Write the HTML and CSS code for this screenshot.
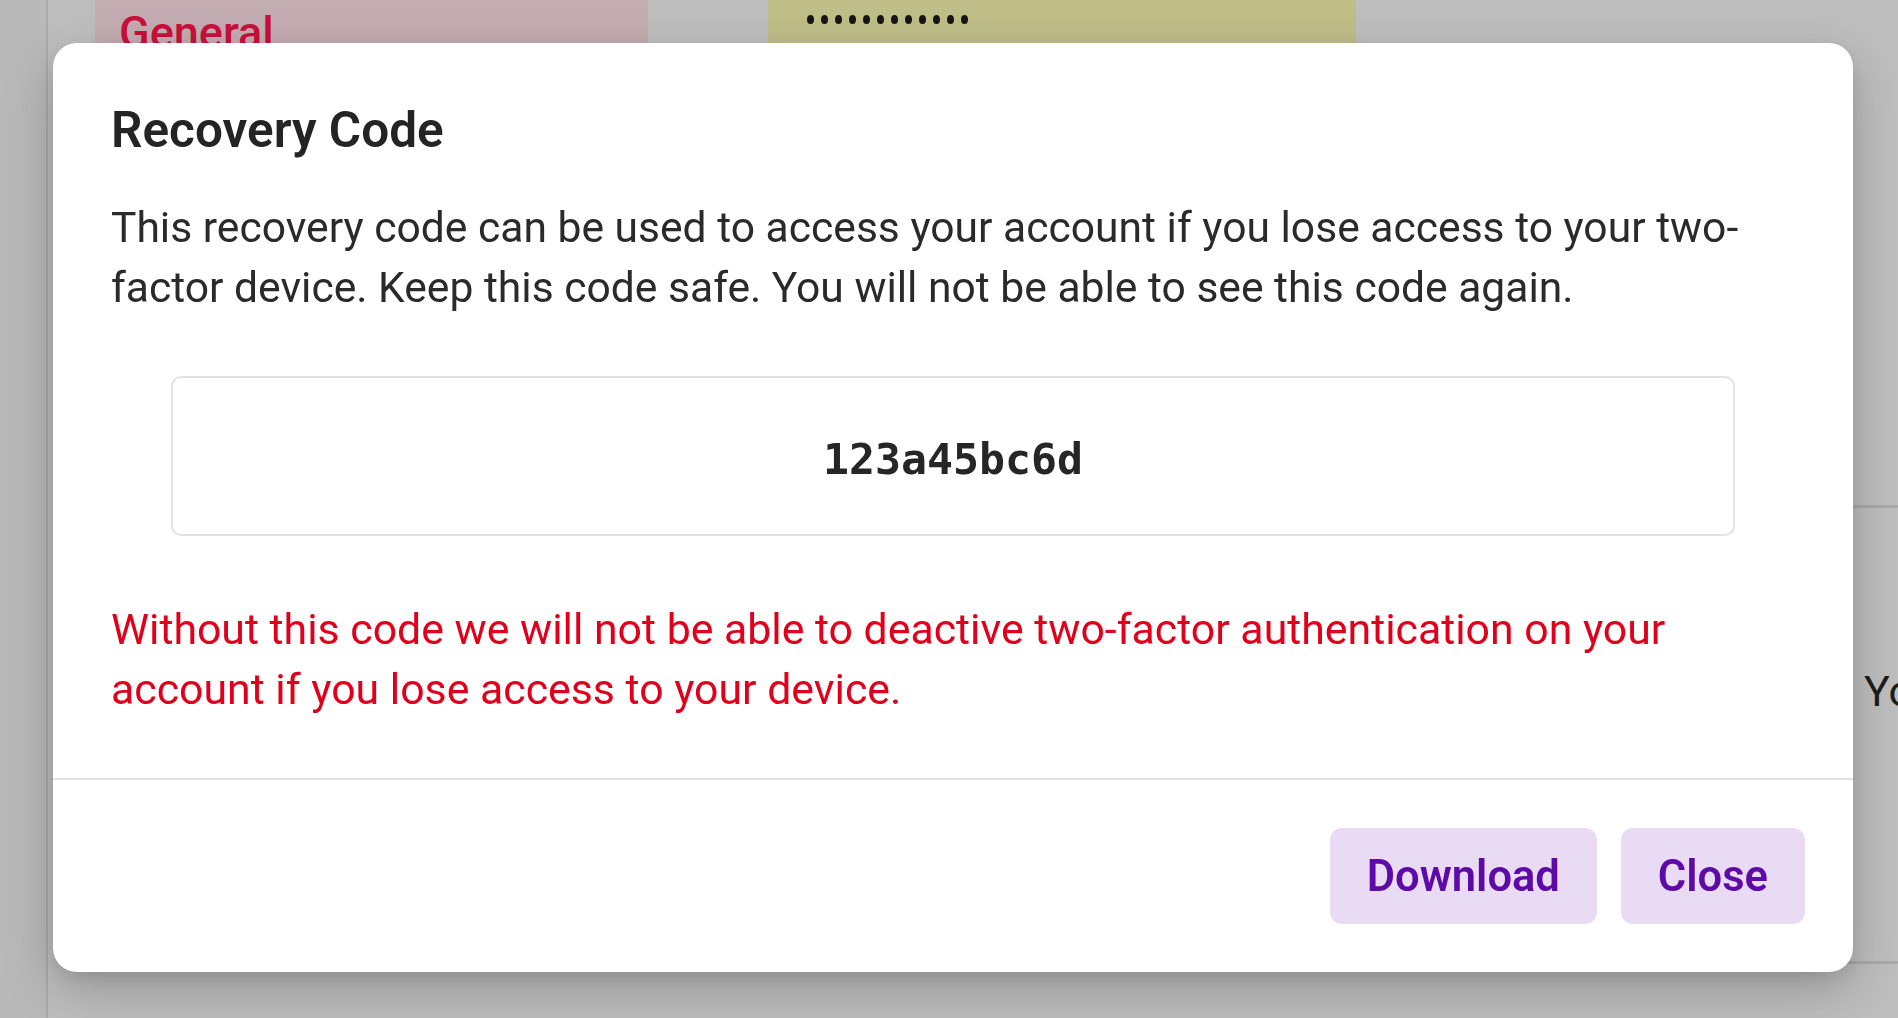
FILE: index.html
```html
<!DOCTYPE html>
<html lang="en">
<head>
<meta charset="utf-8">
<title>Recovery Code</title>
<link rel="stylesheet" href="styles.css">
</head>
<body>
<div class="page">
  <aside class="sidebar"></aside>
  <main class="main">
    <div class="field-row">
      <div class="tab-general">General</div>
      <div class="password-field">
        <span class="dot"></span><span class="dot"></span><span class="dot"></span><span class="dot"></span><span class="dot"></span><span class="dot"></span><span class="dot"></span><span class="dot"></span><span class="dot"></span><span class="dot"></span><span class="dot"></span><span class="dot"></span>
      </div>
    </div>
    <div class="card-row">
      <div class="card"><span class="card-text">You</span></div>
    </div>
  </main>
</div>

<div class="overlay">
  <div class="modal" role="dialog" aria-labelledby="modal-title">
    <div class="modal-body">
      <h2 class="modal-title" id="modal-title">Recovery Code</h2>
      <p class="modal-text">This recovery code can be used to access your account if you lose access to your two-factor device. Keep this code safe. You will not be able to see this code again.</p>
      <div class="code-box"><span class="code">123a45bc6d</span></div>
      <p class="modal-warning">Without this code we will not be able to deactive two-factor authentication on your account if you lose access to your device.</p>
    </div>
    <div class="modal-footer">
      <button class="btn">Download</button>
      <button class="btn">Close</button>
    </div>
  </div>
</div>
</body>
</html>
```
FILE: styles.css
```css
* { box-sizing: border-box; }

html, body {
  margin: 0;
  height: 100%;
}

body {
  background: #bebebe;
  font-family: Roboto, "Liberation Sans", sans-serif;
  color: #262626;
  overflow: hidden;
}

/* underlying page (seen through the overlay) */
.page {
  display: grid;
  grid-template-columns: 48px 1fr;
  height: 100vh;
}

.sidebar {
  background: #b9b9b9;
  border-right: 2px solid #aaaaaa;
}

.main {
  display: flex;
  flex-direction: column;
  padding-left: 47px;
}

.field-row {
  display: flex;
  gap: 120px;
  height: 80px;
}

.tab-general {
  width: 553px;
  background: #c3acb2;
  color: #c8103a;
  font-size: 45px;
  font-weight: 500;
  line-height: 1;
  padding: 10px 0 0 24px;
}

.password-field {
  width: 588px;
  background: #bfbe88;
  display: flex;
  align-items: flex-start;
  gap: 7px;
  padding: 15px 0 0 39px;
}

.dot {
  width: 7px;
  height: 9px;
  border-radius: 50%;
  background: #151515;
}

.card-row {
  display: flex;
  justify-content: flex-end;
  margin-top: 425px;
}

.card {
  width: 400px;
  height: 459px;
  border-top: 3px solid #a9a9a9;
  border-bottom: 3px solid #a9a9a9;
  padding: 158px 0 0 366px;
  font-size: 43px;
  line-height: 50px;
  color: #1d1d1d;
}

/* overlay + modal */
.overlay {
  position: fixed;
  inset: 0;
  padding: 43px 0 0 53px;
}

.modal {
  width: 1800px;
  height: 929px;
  background: #ffffff;
  border-radius: 24px;
  box-shadow: 0 18px 50px rgba(0, 0, 0, 0.22), 0 6px 16px rgba(0, 0, 0, 0.08);
  display: flex;
  flex-direction: column;
  overflow: hidden;
}

.modal-body {
  padding: 58px 58px 0 58px;
  height: 737px;
  border-bottom: 2px solid #e2e2e2;
}

.modal-title {
  margin: 0;
  font-size: 49.5px;
  line-height: 58px;
  font-weight: 600;
  color: #242424;
}

.modal-text {
  margin: 38px 0 0;
  font-size: 42.6px;
  line-height: 60px;
  color: #2a2a2a;
}

.code-box {
  margin: 59px 60px 0;
  height: 160px;
  border: 2px solid #e2e2e2;
  border-radius: 10px;
  display: flex;
  align-items: center;
  justify-content: center;
  padding-top: 5px;
}

.code {
  font-family: "DejaVu Sans Mono", "Liberation Mono", monospace;
  font-weight: 700;
  font-size: 43.2px;
  color: #262626;
}

.modal-warning {
  margin: 63px 0 0;
  font-size: 42.8px;
  line-height: 60px;
  color: #e0001b;
}

.modal-footer {
  display: flex;
  justify-content: flex-end;
  gap: 24px;
  padding: 48px 48px 48px;
}

.btn {
  height: 96px;
  padding: 0 37px;
  border: none;
  border-radius: 12px;
  background: #e8dbf3;
  color: #5e0aa8;
  font-family: Roboto, "Liberation Sans", sans-serif;
  font-size: 43.5px;
  font-weight: 600;
}
```
